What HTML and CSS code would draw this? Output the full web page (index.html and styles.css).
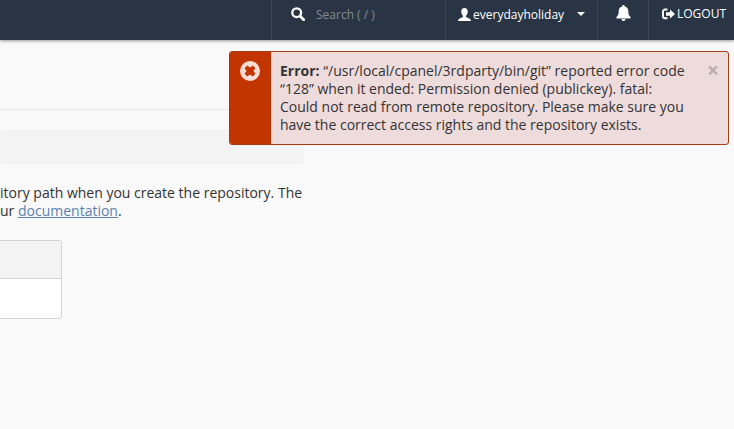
FILE: index.html
```
<!DOCTYPE html>
<html lang="en">
<head>
  <meta charset="UTF-8" />
  <title>Git Version Control</title>
  <meta name="viewport" content="width=device-width, initial-scale=1.0" />
  <link rel="stylesheet" href="styles.css">
</head>
<body>
<header class="navbar">
  <label class="nav-item nav-search">
    <svg class="icon-search" viewBox="0 0 14 14" aria-hidden="true">
      <circle cx="5.7" cy="5.7" r="4.4" fill="none" stroke="currentColor" stroke-width="2.3"/>
      <path d="M9 9l3.7 3.7" stroke="currentColor" stroke-width="2.7" stroke-linecap="round"/>
    </svg>
    <input type="text" class="search-input" placeholder="Search ( / )" aria-label="Search">
  </label>
  <button type="button" class="nav-item nav-user">
    <svg class="icon-user" viewBox="0 0 12 12" aria-hidden="true">
      <path d="M6 0C4 0 3 1.3 3 3.2c0 1.700.7 3.100 1.600 3.900v1.100C3.900 8.700.2 9.300 0 12h12c-.2-2.700-3.900-3.300-4.600-3.800V7.100C8.300 6.300 9 4.900 9 3.200 9 1.300 8 0 6 0z" fill="currentColor"/>
    </svg>
    <span class="user-name">everydayholiday</span>
    <span class="caret"></span>
  </button>
  <button type="button" class="nav-item nav-bell" aria-label="Notifications">
    <svg class="icon-bell" viewBox="0 0 14 16" aria-hidden="true">
      <path d="M7 0c-.7 0-1.200.5-1.200 1.200v.4C3.300 2.100 2.200 4 2.200 6.200c0 3.300-.7 4.300-2.200 5.600V13.400h14v-1.600c-1.500-1.300-2.200-2.300-2.200-5.600 0-2.200-1.100-4.100-3.600-4.600v-.4C8.200.5 7.700 0 7 0zM5 14a2 2 0 0 0 4 0z" fill="currentColor"/>
    </svg>
  </button>
  <a href="#" class="nav-item nav-logout">
    <svg class="icon-logout" viewBox="0 0 13 12" aria-hidden="true">
      <path d="M5.500 1.500H3A2 2 0 0 0 1 3.500v4.800a2 2 0 0 0 2 2h2.500" fill="none" stroke="currentColor" stroke-width="2"/>
      <path d="M4 4.200h4V1.500L13 6 8 10.400V7.700H4z" fill="currentColor"/>
    </svg>
    <span>LOGOUT</span>
  </a>
</header>

<main class="content">
  <div class="page-rule"></div>
  <div class="section-bar"></div>
  <p class="description">itory path when you create the repository. The<br>ur <a href="#">documentation</a>.</p>
  <div class="panel">
    <div class="panel-heading"></div>
    <div class="panel-body"></div>
  </div>
</main>

<div class="alert" role="alert">
  <div class="alert-side">
    <svg class="icon-error" viewBox="0 0 20 20" aria-hidden="true">
      <circle cx="10" cy="10" r="10" fill="#f8dcd6"/>
      <path d="M7.300 4.500L10 6.600l2.700-2.100 2.800 2.800L13.400 10l2.100 2.700-2.800 2.800L10 13.400l-2.700 2.100-2.800-2.800L6.600 10 4.500 7.300z" fill="#c23400"/>
    </svg>
  </div>
  <p class="alert-text"><strong>Error:</strong> “/usr/local/cpanel/3rdparty/bin/git” reported error code “128” when it ended: Permission denied (publickey). fatal: Could not read from remote repository. Please make sure you have the correct access rights and the repository exists.</p>
  <button type="button" class="alert-close" aria-label="Close">×</button>
</div>
</body>
</html>
```
FILE: styles.css
```
* {
  margin: 0;
  padding: 0;
  box-sizing: border-box;
}
body {
  min-height: 100vh;
  overflow-x: hidden;
  background: #f9f9f9;
  color: #333;
  font-family: "Open Sans", "Liberation Sans", sans-serif;
  font-size: 14px;
  line-height: 18px;
}

/* top bar */
.navbar {
  display: flex;
  justify-content: flex-end;
  height: 40px;
  background: #293545;
  box-shadow: 0 1px 3px rgba(0, 0, 0, 0.4);
}
.nav-item {
  display: flex;
  align-items: center;
  height: 40px;
  padding-bottom: 12px;
  border: none;
  border-left: 1px solid #3b4655;
  background: none;
  color: #fff;
  font-family: inherit;
  font-size: 12px;
  text-decoration: none;
  cursor: pointer;
}
.nav-search {
  width: 174px;
  padding-left: 19px;
}
.search-input {
  width: 120px;
  margin-left: 11px;
  border: none;
  outline: none;
  background: none;
  color: #fff;
  font-family: inherit;
  font-size: 12px;
}
.search-input::placeholder {
  color: #858b94;
}
.icon-search {
  width: 14px;
  height: 14px;
}
.nav-user {
  width: 152px;
  padding-left: 12px;
}
.icon-user {
  width: 13px;
  height: 13px;
  margin-right: 2px;
}
.caret {
  margin-left: 13px;
  border: 4px solid transparent;
  border-top-color: #fff;
  border-bottom: none;
}
.nav-bell {
  width: 51px;
  padding-left: 18px;
  padding-bottom: 14px;
}
.icon-bell {
  width: 15px;
  height: 16px;
}
.nav-logout {
  width: 86px;
  padding-left: 13px;
}
.icon-logout {
  width: 13px;
  height: 12px;
  margin-right: 2px;
}

/* page content */
.content {
  max-width: 304px;
  padding-top: 69px;
}
.page-rule {
  height: 1px;
  background: #e8e8e8;
}
.section-bar {
  height: 34px;
  margin-top: 20px;
  border-radius: 3px;
  background: #f3f3f3;
}
.description {
  margin-top: 20px;
  white-space: nowrap;
}
.description a {
  color: #5a82b0;
}
.panel {
  width: 62px;
  margin-top: 20px;
  border: 1px solid #d3d3d3;
  border-left: none;
  border-radius: 0 3px 3px 0;
  background: #fff;
  overflow: hidden;
}
.panel-heading {
  height: 38px;
  border-bottom: 1px solid #d3d3d3;
  background: #f3f3f3;
}
.panel-body {
  height: 39px;
}

/* error notice, floats over the page */
.alert {
  position: absolute;
  top: 51px;
  right: 5px;
  display: flex;
  width: 500px;
  max-width: 100%;
  border: 1px solid #a23c12;
  border-radius: 3px;
  background: #eedbdc;
  overflow: hidden;
}
.alert-side {
  flex: none;
  width: 41px;
  padding: 9px 10px;
  background: #c23400;
}
.icon-error {
  display: block;
  width: 20px;
  height: 20px;
}
.alert-text {
  flex: 1;
  padding: 10px 10px 10px 9px;
}
.alert-close {
  align-self: flex-start;
  width: 30px;
  padding-top: 9px;
  border: none;
  background: none;
  color: #bbaeb0;
  font-family: inherit;
  font-size: 21px;
  font-weight: bold;
  line-height: 18px;
  cursor: pointer;
}
```
